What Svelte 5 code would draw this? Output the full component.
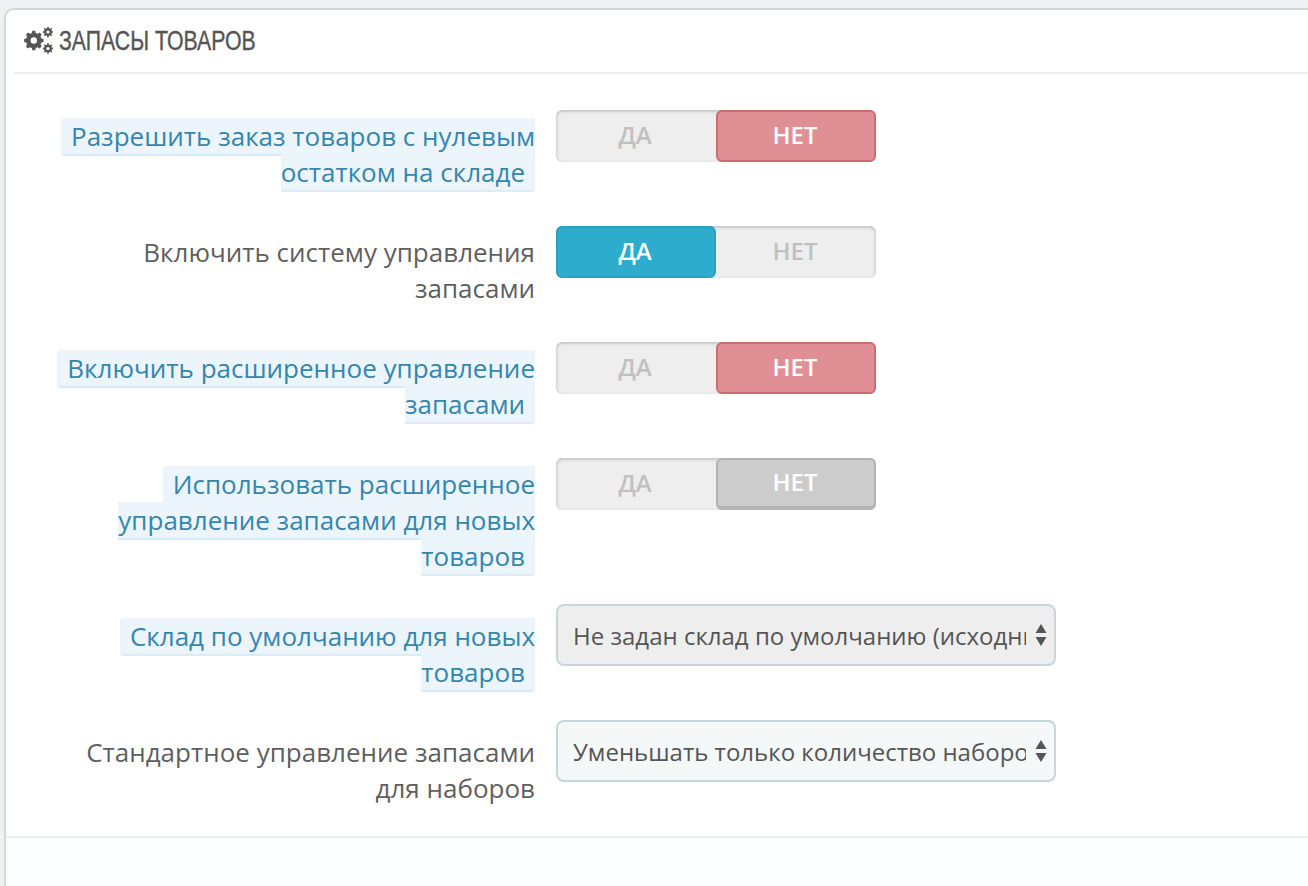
<script>
  function gear(cx, cy, outer, inner, hole, teeth) {
    let d = '';
    const step = (Math.PI * 2) / teeth;
    for (let i = 0; i < teeth; i++) {
      const a = i * step;
      const pts = [
        [inner, a - step * 0.32],
        [outer, a - step * 0.19],
        [outer, a + step * 0.19],
        [inner, a + step * 0.32]
      ];
      for (const [r, t] of pts) {
        d += (d ? 'L' : 'M') + (cx + r * Math.cos(t)).toFixed(2) + ' ' + (cy + r * Math.sin(t)).toFixed(2);
      }
    }
    d += 'Z';
    d += `M${cx + hole} ${cy}A${hole} ${hole} 0 1 0 ${cx - hole} ${cy}A${hole} ${hole} 0 1 0 ${cx + hole} ${cy}Z`;
    return d;
  }

  const cogs = [gear(9.8, 13.5, 9.8, 7.8, 3.2, 8), gear(24, 5, 5.2, 3.9, 1.6, 8), gear(24, 21.5, 5.2, 3.9, 1.6, 8)];

  const rows = [
    { label: 'Разрешить заказ товаров с нулевым остатком на складе', hint: true, type: 'toggle', value: 'no' },
    { label: 'Включить систему управления запасами', hint: false, type: 'toggle', value: 'yes' },
    { label: 'Включить расширенное управление запасами', hint: true, type: 'toggle', value: 'no' },
    { label: 'Использовать расширенное управление запасами для новых товаров', hint: true, type: 'toggle', value: 'off' },
    { label: 'Склад по умолчанию для новых товаров', hint: true, type: 'select', value: 'Не задан склад по умолчанию (исходный)', muted: true },
    { label: 'Стандартное управление запасами для наборов', hint: false, type: 'select', value: 'Уменьшать только количество наборов' }
  ];
</script>

<div class="page">
  <div class="panel">
    <h3 class="panel-heading">
      <svg class="cogs" viewBox="0 0 29 27" width="29" height="27" aria-hidden="true">
        {#each cogs as d}
          <path {d} fill-rule="evenodd" />
        {/each}
      </svg>
      <span class="title">ЗАПАСЫ ТОВАРОВ</span>
    </h3>

    <div class="form-wrapper">
      {#each rows as row}
        <div class="form-group">
          <div class="control-label">
            {#if row.hint}
              <span class="label-tooltip">{row.label}</span>
            {:else}
              {row.label}
            {/if}
          </div>
          {#if row.type === 'toggle'}
            <div class="switch">
              <span class="opt" class:yes={row.value === 'yes'}>ДА</span>
              <span class="opt" class:no={row.value === 'no'} class:off={row.value === 'off'}>НЕТ</span>
            </div>
          {:else}
            <div class="select-wrap">
              <select class:muted={row.muted}>
                <option>{row.value}</option>
              </select>
              <svg class="arrows" viewBox="0 0 12 24" width="12" height="24" aria-hidden="true">
                <path d="M6 1 11.5 10H0.5Z" />
                <path d="M6 23 11.5 14H0.5Z" />
              </svg>
            </div>
          {/if}
        </div>
      {/each}
    </div>

    <div class="panel-footer"></div>
  </div>
</div>

<style>
  :global(body) {
    margin: 0;
    background: #eff1f3;
    overflow: hidden;
  }
  .page {
    height: 886px;
    padding: 8px 0 0 4px;
    box-sizing: border-box;
    overflow: hidden;
    font-family: 'Open Sans', sans-serif;
    color: #5f5f5f;
  }
  .panel {
    width: 1320px;
    height: 900px;
    box-sizing: border-box;
    display: flex;
    flex-direction: column;
    background: #fff;
    border: 2px solid #d3d8db;
    border-radius: 10px;
  }
  .panel-heading {
    display: flex;
    align-items: center;
    gap: 6px;
    height: 62px;
    flex: none;
    margin: 0 0 0 8px;
    padding-left: 10px;
    border-bottom: 2px solid #eeeeee;
    font-family: 'Liberation Sans', sans-serif;
    font-size: 28px;
    font-weight: 400;
    color: #555;
  }
  .title {
    display: inline-block;
    transform: scaleX(0.76);
    transform-origin: left center;
    white-space: nowrap;
    -webkit-text-stroke: 0.4px #555;
  }
  .cogs {
    fill: #555;
    flex: none;
    margin-top: -2px;
  }
  .form-wrapper {
    padding-top: 36px;
    flex: none;
  }
  .form-group {
    display: flex;
    align-items: flex-start;
    margin-bottom: 36px;
  }
  .form-group:last-child {
    margin-bottom: 30px;
  }
  .control-label {
    width: 490px;
    margin: 0 21px 0 39px;
    padding-top: 8px;
    text-align: right;
    font-size: 26px;
    line-height: 36px;
    flex: none;
  }
  .label-tooltip {
    padding: 0 10px;
    background: #ebf5fb;
    border-bottom: 2px solid #d9edf7;
    border-radius: 4px;
    color: #3586ae;
  }
  .switch {
    display: flex;
    width: 320px;
    height: 52px;
    border-radius: 6px;
    background: #eeeeee;
    box-shadow: inset 0 2px 3px rgba(0, 0, 0, 0.14), inset 2px 0 3px rgba(0, 0, 0, 0.05), inset -2px 0 3px rgba(0, 0, 0, 0.05);
  }
  .opt {
    display: flex;
    width: 50%;
    flex: none;
    align-items: center;
    justify-content: center;
    box-sizing: border-box;
    padding: 0 2px 4px 0;
    border-radius: 6px;
    font-size: 24px;
    font-weight: 600;
    color: #c0c0c0;
  }
  .yes {
    background: #2eacce;
    border: 2px solid #29a0c0;
    color: #fff;
  }
  .no {
    background: #e08f95;
    border: 2px solid #cd6b70;
    color: #fff;
  }
  .off {
    background: #cccccc;
    border: 2px solid #b3b3b3;
    border-bottom-width: 4px;
    color: #fff;
  }
  .select-wrap {
    position: relative;
    width: 500px;
    height: 62px;
    margin-top: -6px;
  }
  select {
    display: block;
    width: 100%;
    height: 100%;
    box-sizing: border-box;
    padding: 0 28px 0 15px;
    appearance: none;
    background: #f5f8f9;
    border: 2px solid #c7d6db;
    border-radius: 8px;
    font-family: 'Open Sans', sans-serif;
    font-size: 24px;
    color: #555;
  }
  select.muted {
    background: #eeeeee;
  }
  .arrows {
    position: absolute;
    right: 9px;
    top: 19px;
    fill: #555;
    pointer-events: none;
  }
  .panel-footer {
    flex: 1;
    border-top: 2px solid #eeeeee;
    background: #fcfdfe;
  }
</style>
